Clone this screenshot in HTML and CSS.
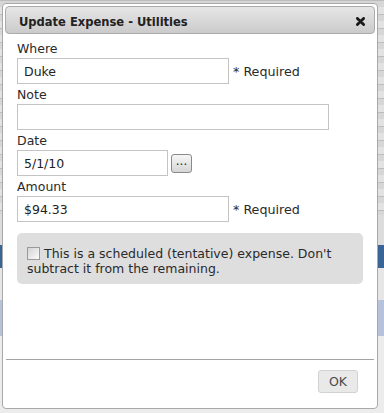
FILE: index.html
```html
<!DOCTYPE html>
<html>
<head>
<meta charset="utf-8">
<link rel="stylesheet" href="styles.css">
</head>
<body>
<div class="dialog">
  <div class="titlebar">
    <span class="title">Update Expense - Utilities</span>
    <svg class="close" width="9" height="9" viewBox="0 0 9 9"><path d="M1.4 1.4 L7.6 7.6 M7.6 1.4 L1.4 7.6" stroke="#1a1a1a" stroke-width="2.8" stroke-linecap="round"/></svg>
  </div>
  <div class="content">
    <div class="field">
      <label class="label">Where</label>
      <div class="row">
        <input class="input w-mid" type="text" value="Duke">
        <span class="req">* Required</span>
      </div>
    </div>
    <div class="field">
      <label class="label">Note</label>
      <div class="row">
        <input class="input w-wide" type="text" value="">
      </div>
    </div>
    <div class="field">
      <label class="label">Date</label>
      <div class="row">
        <input class="input w-short" type="text" value="5/1/10">
        <button class="dots">...</button>
      </div>
    </div>
    <div class="field">
      <label class="label">Amount</label>
      <div class="row">
        <input class="input w-mid" type="text" value="$94.33">
        <span class="req">* Required</span>
      </div>
    </div>
    <div class="note-box">
      <input class="check" type="checkbox">This is a scheduled (tentative) expense. Don't subtract it from the remaining.
    </div>
  </div>
  <div class="buttonpane">
    <button class="ok">OK</button>
  </div>
</div>
</body>
</html>
```

FILE: styles.css
```css
html, body {
  margin: 0;
  padding: 0;
}
body {
  width: 384px;
  height: 413px;
  overflow: hidden;
  font-family: "DejaVu Sans", Verdana, sans-serif;
  background:
    repeating-linear-gradient(to bottom, #bdbdbd 0 1px, #d6d6d6 1px 7px, #e2e2e2 7px 14px) 0 0 / 100% 215px no-repeat,
    linear-gradient(to bottom, #dcdcdc 0 245px, #3b6496 245px 268px, #e6e6e6 268px 300px, #b6c1dc 300px 336px, #ececec 336px);
}
.dialog {
  margin: 3px 0 0 2px;
  width: 376px;
  height: 406px;
  box-sizing: border-box;
  border: 1px solid #a9a9a9;
  border-radius: 4px;
  background: #fff;
  padding: 2px;
  display: flex;
  flex-direction: column;
}
.titlebar {
  height: 28px;
  box-sizing: border-box;
  border: 1px solid #ababab;
  border-radius: 4px;
  background: linear-gradient(to bottom, #e6e6e6, #cbcbcb);
  display: flex;
  align-items: center;
  justify-content: space-between;
  padding: 0 9px 0 13px;
}
.title {
  font-family: "DejaVu Sans Condensed", "DejaVu Sans", sans-serif;
  font-stretch: condensed;
  font-weight: bold;
  font-size: 12.8px;
  color: #222;
  padding-top: 2px;
}
.close {
  display: block;
  margin-top: 2px;
}
.content {
  flex: 1;
  padding: 6px 12px 0 12px;
}
.field {
  margin-bottom: 2px;
}
.label {
  display: block;
  height: 18px;
  line-height: 18px;
  font-size: 12.5px;
  color: #2a2a2a;
}
.row {
  display: flex;
  align-items: center;
}
.input {
  box-sizing: border-box;
  height: 26px;
  border: 1px solid #c4c4c4;
  border-radius: 0;
  padding: 0 6px;
  margin: 0;
  font-family: "DejaVu Sans", Verdana, sans-serif;
  font-size: 12.5px;
  color: #222;
  background: #fff;
  outline: none;
}
.w-mid { width: 212px; }
.w-wide { width: 312px; }
.w-short { width: 151px; }
.req {
  margin-left: 4px;
  font-size: 12.7px;
  color: #2a2a2a;
}
.dots {
  margin: 0 0 0 3px;
  width: 21px;
  height: 19px;
  box-sizing: border-box;
  border: 1px solid #8a8a8a;
  border-radius: 3px;
  background: linear-gradient(to bottom, #f6f6f6, #d6d6d6);
  font-family: "DejaVu Sans", sans-serif;
  font-size: 12px;
  line-height: 12px;
  padding: 0 0 4px 0;
  color: #222;
}
.note-box {
  margin-top: 11px;
  width: 346px;
  box-sizing: border-box;
  background: #dedede;
  border-radius: 5px;
  padding: 14px 10px 8px 10px;
  font-size: 12.5px;
  line-height: 14.5px;
  color: #2a2a2a;
}
.check {
  -webkit-appearance: none;
  appearance: none;
  width: 13px;
  height: 13px;
  box-sizing: border-box;
  margin: 0 4px 0 0;
  border: 1px solid #9a9a9a;
  background: linear-gradient(135deg, #d4d4d4, #fbfbfb);
  vertical-align: -2px;
}
.buttonpane {
  border-top: 1px solid #a4a4a4;
  height: 47px;
  box-sizing: border-box;
  display: flex;
  justify-content: flex-end;
  align-items: flex-start;
  padding: 10px 16px 0 0;
  margin: 0 1px;
}
.ok {
  width: 40px;
  height: 23px;
  box-sizing: border-box;
  border: 1px solid #d2d2d2;
  border-radius: 3px;
  background: #e9e9e9;
  font-family: "DejaVu Sans", sans-serif;
  font-size: 12.5px;
  color: #4a4a4a;
  padding: 0;
}
```
